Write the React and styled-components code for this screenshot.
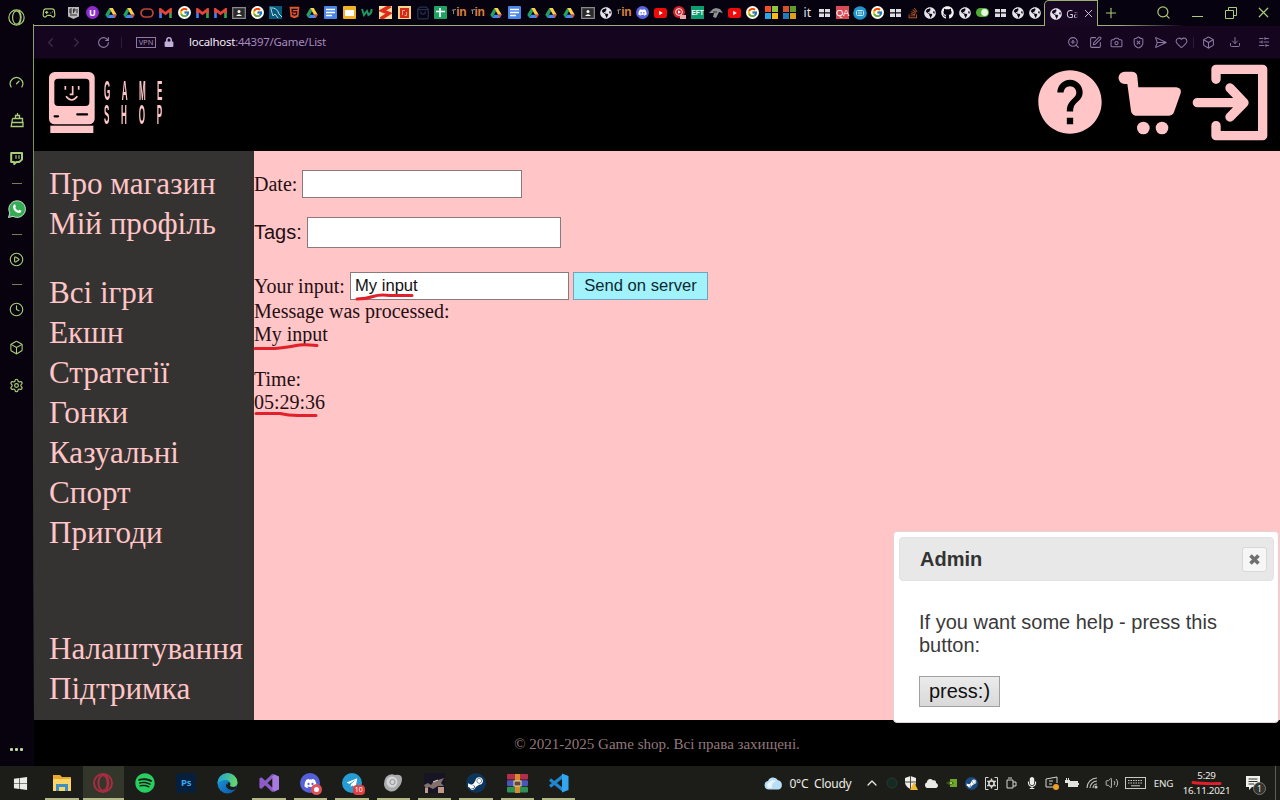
import React from 'react';
import styled, { createGlobalStyle } from 'styled-components';
import {
  Gauge, CirclePlay, Clock, Box, Settings, Gamepad2, Search, X, Plus, ChevronLeft, ChevronRight,
  ChevronUp, RotateCw, ZoomIn, SquarePen, Camera, ShieldX, SendHorizontal, Heart, Download, SlidersHorizontal,
  Volume2, ShoppingBag,
} from 'lucide-react';
import {
  FaWhatsapp, FaWindows, FaSpotify, FaDiscord, FaTelegramPlane, FaSteamSymbol, FaGithub,
  FaStackOverflow, FaHtml5, FaGlobeAmericas, FaLock, FaMicrophone, FaCloud,
} from 'react-icons/fa';
import { FcGoogle } from 'react-icons/fc';
import { MdHelp } from 'react-icons/md';

const PINK = '#ffc5c7';
const LIME = '#a9cc75';
const UI = '"Noto Sans", "Open Sans", sans-serif';
const SERIF = '"Liberation Serif", serif';
const SANS = '"Liberation Sans", sans-serif';

const Global = createGlobalStyle`
  *, *::before, *::after { box-sizing: border-box; }
  body { margin: 0; background: #000; overflow: hidden; }
  svg { display: block; flex: none; }
`;

const Screen = styled.div`
  position: relative;
  width: 1280px;
  height: 800px;
  display: flex;
  flex-direction: column;
  overflow: hidden;
  font-family: ${UI};
`;
const Browser = styled.div`
  display: flex;
  height: 766px;
`;
const Window = styled.div`
  width: 1246px;
  display: flex;
  flex-direction: column;
`;
const Cell = styled.div`
  flex: none;
  width: ${(p) => p.$w}px;
  height: ${(p) => (p.$h ? `${p.$h}px` : '100%')};
  display: flex;
  align-items: center;
  justify-content: center;
`;

/* ---------- browser side bar ---------- */
const SideBar = styled.div`
  width: 34px;
  flex: none;
  display: flex;
  flex-direction: column;
  background: #08020f;
  border-right: 1px solid;
  border-image: linear-gradient(#08020f 25px, #8da561 25px, #7b9157 150px, #3f4934 300px, #2b2c28 560px, #0b0410 720px) 1;
  color: ${LIME};
`;
const Dash = styled.i`
  width: 10px;
  height: 1px;
  background: #75805a;
`;
const Spring = styled.div`
  flex: 1;
`;
const Dots = styled.div`
  display: flex;
  gap: 2.5px;
  span { width: 2.5px; height: 2.5px; background: #c3d79c; border-radius: 1px; }
`;

/* ---------- tab strip ---------- */
const TabStrip = styled.div`
  height: 26px;
  display: flex;
  align-items: stretch;
  background: #07020f;
  border-bottom: 1px solid;
  border-image: linear-gradient(90deg, #9db073 0, #9db073 1085px, #07020f 1150px) 1;
  color: ${LIME};
`;
const ActiveTab = styled.div`
  width: 54px;
  height: 26px;
  flex: none;
  display: flex;
  align-items: center;
  gap: 4px;
  padding-left: 5px;
  background: #180722;
  border: 1px solid #9db073;
  border-bottom: 0;
  border-radius: 5px 0 0 0;
  color: #d9d2de;
`;
const TabTitle = styled.span`
  width: 12px;
  overflow: hidden;
  white-space: nowrap;
  font-size: 10px;
  line-height: 14px;
  mask-image: linear-gradient(90deg, #000 70%, transparent);
`;
const Tile = styled.span`
  width: 13px;
  height: 13px;
  display: flex;
  align-items: center;
  justify-content: center;
  white-space: nowrap;
  background: ${(p) => p.$bg || 'transparent'};
  color: ${(p) => p.$fg || '#fff'};
  border-radius: ${(p) => p.$r || 0}px;
  font: ${(p) => p.$font || `400 8px/13px ${UI}`};
  letter-spacing: ${(p) => p.$ls || 0}px;
`;

/* ---------- address bar ---------- */
const AddressBar = styled.div`
  height: 33px;
  display: flex;
  align-items: center;
  background: #15051f;
  border-bottom: 1px solid #09030d;
  color: #8e79a4;
`;
const Faint = styled.div`
  display: flex;
  color: #3c2b49;
`;
const Divider = styled.i`
  width: 1px;
  height: 11px;
  background: #2d1b39;
`;
const Vpn = styled.span`
  width: 20px;
  height: 11px;
  border: 1px solid #8e79a4;
  font-size: 7.5px;
  line-height: 9px;
  text-align: center;
  color: #a08bb5;
`;
const Url = styled.div`
  margin-left: 8px;
  flex: 1;
  font-size: 11.4px;
  line-height: 16px;
  letter-spacing: -0.22px;
  color: #a58cbd;
  b { font-weight: 400; color: #f3eef6; }
`;

/* ---------- shop page ---------- */
const Header = styled.header`
  height: 92px;
  display: flex;
  align-items: center;
  justify-content: space-between;
  padding: 0 12px 5px 15px;
  background: #000;
`;
const Brand = styled.div`
  display: flex;
  align-items: flex-start;
  gap: 9px;
`;
const BrandName = styled.div`
  width: 70px;
  padding-top: 7px;
  color: ${PINK};
  font: 700 27px/24px ${SANS};
`;
const BrandWord = styled.div`
  width: 230px;
  letter-spacing: ${(p) => p.$ls}px;
  transform: scaleX(0.3);
  transform-origin: 0 0;
  white-space: nowrap;
`;
const Actions = styled.div`
  display: flex;
  align-items: center;
  gap: 10px;
  color: ${PINK};
`;
const Body = styled.div`
  display: flex;
  height: 569px;
`;
const Menu = styled.nav`
  width: 220px;
  flex: none;
  padding: 12.5px 0 0 15px;
  display: flex;
  flex-direction: column;
  background: #353331;
`;
const MenuGroup = styled.div`
  display: flex;
  flex-direction: column;
  margin-bottom: ${(p) => p.$after}px;
`;
const MenuLink = styled.a`
  height: 40px;
  color: ${PINK};
  font: 400 31.1px/40px ${SERIF};
  white-space: nowrap;
`;
const Content = styled.main`
  flex: 1;
  padding-top: 19px;
  background: ${PINK};
  color: #240f12;
  font: 400 20px/23px ${SERIF};
`;
const Field = styled.div`
  display: flex;
  align-items: center;
  height: ${(p) => p.$h}px;
  margin-bottom: ${(p) => p.$after || 0}px;
  font-family: ${(p) => (p.$sans ? SANS : SERIF)};
`;
const Label = styled.label`
  width: ${(p) => p.$w}px;
  white-space: nowrap;
`;
const Input = styled.input`
  width: ${(p) => p.$w}px;
  height: 100%;
  margin: 0;
  padding: 1px 4px;
  border: 1px solid #8b7a7b;
  border-radius: 0;
  background: #fff;
  color: #111;
  font: 400 16.6px ${SANS};
  outline: 0;
`;
const SendButton = styled.button`
  width: 135px;
  height: 28px;
  margin-left: 4px;
  padding: 0;
  border: 1px solid #6fa3c4;
  background: #a2f2fc;
  color: #0d2a30;
  font: 400 16.6px ${SANS};
`;
const Output = styled.div`
  margin-bottom: 22px;
`;
const Footer = styled.footer`
  height: 46px;
  display: flex;
  align-items: center;
  justify-content: center;
  padding-top: 1px;
  background: #000;
  color: #93787a;
  font: 400 15px/20px ${SERIF};
`;

/* ---------- help dialog ---------- */
const Dialog = styled.section`
  position: absolute;
  left: 893px;
  top: 531px;
  width: 386px;
  height: 192px;
  padding: 5px 4px 4px 5px;
  background: #fff;
  border: 1px solid #e4d3d4;
  border-radius: 4px;
  color: #3a3a3a;
  font: 400 20px/23px ${SANS};
`;
const DialogTitle = styled.div`
  height: 44px;
  display: flex;
  align-items: center;
  justify-content: space-between;
  padding: 0 6px 0 20px;
  background: #e8e8e8;
  border: 1px solid #e2e2e2;
  border-radius: 4px;
  color: #333;
  font-weight: 700;
`;
const CloseButton = styled.button`
  width: 25px;
  height: 25px;
  padding: 0;
  display: flex;
  align-items: center;
  justify-content: center;
  border: 1px solid #d8d8d8;
  border-radius: 3px;
  background: #f6f6f6;
`;
const DialogBody = styled.div`
  padding: 30px 40px 0 20px;
`;
const PressButton = styled.button`
  display: block;
  width: 81px;
  height: 31px;
  margin-top: 19px;
  padding: 0;
  border: 1px solid #a0a0a0;
  background: linear-gradient(#ebebeb, #d9d9d9);
  color: #111;
  font: 400 20px ${SANS};
`;

/* ---------- taskbar ---------- */
const TaskBar = styled.div`
  height: 34px;
  display: flex;
  background: #1c1d18;
  color: #ecece6;
`;
const Task = styled.div`
  position: relative;
  width: 41.4px;
  flex: none;
  display: flex;
  align-items: center;
  justify-content: center;
  background: ${(p) => (p.$active ? '#33362a' : 'transparent')};
  &::after {
    content: '';
    position: absolute;
    bottom: 0;
    left: ${(p) => (p.$active ? 0 : 4)}px;
    right: ${(p) => (p.$active ? 0 : 4)}px;
    height: 2px;
    background: ${(p) => (p.$open ? '#b4b886' : 'transparent')};
  }
`;
const Round = styled.span`
  position: relative;
  width: 20px;
  height: 20px;
  display: flex;
  align-items: center;
  justify-content: center;
  border-radius: ${(p) => p.$r ?? 10}px;
  background: ${(p) => p.$bg};
  color: ${(p) => p.$fg || '#fff'};
  font: 700 9.5px/20px ${UI};
`;
const Badge = styled.span`
  position: absolute;
  right: -3px;
  bottom: -2px;
  min-width: 12px;
  height: 10px;
  padding: 0 1px;
  border-radius: 4px;
  background: #e0403f;
  color: #fff;
  font: 400 7px/10px ${UI};
  text-align: center;
`;
const Dot = styled.i`
  position: absolute;
  right: -2px;
  bottom: -2px;
  width: 11px;
  height: 11px;
  border-radius: 50%;
  border: 3px solid #e2525c;
  background: #fff;
`;
const Weather = styled.div`
  display: flex;
  align-items: center;
  width: 98px;
  gap: 7px;
  font-size: 12px;
  letter-spacing: -0.25px;
  white-space: pre;
`;
const TrayText = styled.div`
  width: ${(p) => p.$w}px;
  flex: none;
  text-align: center;
  font-size: 9.8px;
  line-height: 15px;
  letter-spacing: -0.25px;
  align-self: center;
`;
const Notice = styled.div`
  position: relative;
  display: flex;
  align-items: center;
  justify-content: center;
  width: 41px;
  padding-right: 4px;
  border-right: 1px solid #5b5c56;
`;
const NoticeCount = styled.span`
  position: absolute;
  left: 18px;
  top: 16px;
  width: 13px;
  height: 13px;
  border: 1px solid #77786f;
  border-radius: 50%;
  background: #33342e;
  font-size: 8.5px;
  line-height: 11px;
  text-align: center;
`;
const Ink = styled.svg`
  position: absolute;
  left: 0;
  top: 0;
  fill: none;
  stroke: #e0202a;
  stroke-width: 3;
  stroke-linecap: round;
  stroke-linejoin: round;
  pointer-events: none;
`;

/* ---------- small drawings ---------- */
const Drive = () => (
  <svg width="12" height="12" viewBox="0 0 12 12">
    <path d="M4.2 1 L0.3 7.8 L2.3 11 L6 4.3Z" fill="#21a463" />
    <path d="M4.2 1 H7.8 L11.7 7.8 H8Z" fill="#ffcf48" />
    <path d="M4.3 7.8 H11.7 L9.7 11 H2.3Z" fill="#4688f4" />
    <path d="M11.7 7.8 L9.7 11 L7.9 7.8Z" fill="#e5483a" />
  </svg>
);
const Gmail = () => (
  <svg width="13" height="10" viewBox="0 0 13 10">
    <path d="M1.5 10V1.5" stroke="#4285f4" strokeWidth="2.6" />
    <path d="M11.5 10V1.5" stroke="#34a853" strokeWidth="2.6" />
    <path d="M1.5 5V1.6L6.5 5.6L11.5 1.6V5" stroke="#ea4335" strokeWidth="2.7" fill="none" />
  </svg>
);
const Docs = () => (
  <Tile $bg="#4a86e8" $r={1}>
    <svg width="9" height="9" viewBox="0 0 9 9"><path d="M0 1.5H9M0 4.5H9M0 7.5H6" stroke="#fff" strokeWidth="1.4" /></svg>
  </Tile>
);
const Sheets = () => (
  <Tile $bg="#1fa362" $r={1}>
    <svg width="9" height="9" viewBox="0 0 9 9"><path d="M0 3.5H9M4 0V9" stroke="#fff" strokeWidth="1.7" /></svg>
  </Tile>
);
const Slides = () => (
  <Tile $bg="#f0b323" $r={1}>
    <svg width="9" height="6" viewBox="0 0 9 6"><path d="M0 0H9V6H0Z" fill="#fff" /></svg>
  </Tile>
);
const Classroom = () => (
  <svg width="14" height="12" viewBox="0 0 14 12">
    <path d="M.7 .7H13.3V11.3H.7Z" fill="#2b2b2b" stroke="#8a8a8e" strokeWidth="1.2" />
    <circle cx="7" cy="4.6" r="1.5" fill="#fff" /><path d="M4 9Q7 5.6 10 9Z" fill="#fff" />
  </svg>
);
const Squares = ({ colors, s = 6, g = 1 }) => (
  <svg width={s * 2 + g} height={s * 2 + g} viewBox={`0 0 ${s * 2 + g} ${s * 2 + g}`}>
    {colors.map((c, i) => (
      <rect key={i} x={(i % 2) * (s + g)} y={(i > 1 ? 1 : 0) * (s + g)} width={s} height={s} fill={c} />
    ))}
  </svg>
);
const Blocks = () => (
  <svg width="11" height="8" viewBox="0 0 11 8">
    <path d="M0 0H5V3.3H0ZM6 0H11V3.3H6ZM0 4.6H5V8H0ZM6 4.6H11V8H6Z" fill="#dcdce2" />
  </svg>
);
const Globe = () => <FaGlobeAmericas size={12} color="#e6e3ea" />;
const Moodle = () => (
  <Tile $fg="#d9803c" $font={`700 12px/13px ${SANS}`} $ls={-0.3}>
    <svg width="4" height="7" viewBox="0 0 4 7"><path d="M0 1.2L4 .5M1.5 1V5" fill="none" stroke="#8c8880" /></svg>
    in
  </Tile>
);
const Oracle = () => (
  <svg width="14" height="10" viewBox="0 0 14 10"><rect x="1" y="1" width="12" height="8" rx="4" fill="none" stroke="#bd4635" strokeWidth="1.7" /></svg>
);
const Dolphin = () => (
  <Tile $bg="#075a7b">
    <svg width="13" height="13" viewBox="0 0 13 13"><path d="M1 2Q8 1 10 8L13 11M2 3Q3 7 4 10L6 8L9 12" fill="none" stroke="#b9dbe5" /></svg>
  </Tile>
);
const Epic = () => (
  <svg width="11" height="12" viewBox="0 0 11 12">
    <path d="M0 0H11V9.5L5.5 12L0 9.5Z" fill="#b9b9bb" />
    <path d="M2 2V6M2 2H4M2 4H4M2 6H4M5.5 2V6M5.5 2H7V4H5.5M9 2V6M2 8H9" stroke="#222" strokeWidth=".9" fill="none" />
  </svg>
);
const Bag = () => <ShoppingBag size={14} strokeWidth={2.2} color="#22304f" />;
const RedS = () => (
  <Tile $bg="#f6dfa0">
    <svg width="13" height="13" viewBox="0 0 13 13"><path d="M11.5 0L3 4.6L10 7.4L1.5 13" fill="none" stroke="#df2b1c" strokeWidth="3.6" /></svg>
  </Tile>
);
const RedSquare = () => (
  <Tile $bg="#f3d58e">
    <svg width="9" height="10" viewBox="0 0 9 10"><path d="M0 0H9V10H0Z" fill="#d8281c" /><path d="M2.5 7V2.5H5M4.5 7.5H6.5V4" fill="none" stroke="#f3b58e" strokeWidth=".9" /></svg>
  </Tile>
);
const Wave = () => (
  <svg width="12" height="9" viewBox="0 0 12 9"><path d="M1 1L3 7L6 3L7.5 7Q11 5 10.5 1" fill="none" stroke="#1f9765" strokeWidth="2" /></svg>
);
const Wings = () => (
  <svg width="14" height="12" viewBox="0 0 14 12"><path d="M0 6L4 2L7 1L11 2L14 6L10 5L7 11L4 10L5 6Z" fill="#8d9290" /><path d="M4 5H8" stroke="#222" /></svg>
);
const RedDisc = () => (
  <svg width="13" height="13" viewBox="0 0 13 13"><circle cx="6" cy="6" r="6" fill="#d1202c" /><circle cx="6" cy="6" r="3.4" fill="none" stroke="#fff" strokeWidth=".9" /><path d="M5 4.3L8 6L5 7.7Z" fill="#fff" /><path d="M7 9H13V13H7Z" fill="#e7a9a9" /></svg>
);
const BlueDisc = () => (
  <svg width="14" height="14" viewBox="0 0 14 14"><circle cx="7" cy="7" r="6.8" fill="#2195c9" /><rect x="3.5" y="4.5" width="7" height="5" rx="1" fill="none" stroke="#bfe7f7" /><path d="M5 6.2H9M5 7.8H9" stroke="#bfe7f7" strokeWidth=".8" /></svg>
);
const Toggle = () => (
  <svg width="13" height="9" viewBox="0 0 13 9"><rect width="13" height="9" rx="4.5" fill="#4fae34" /><circle cx="8.6" cy="4.5" r="3.4" fill="#e9f6e4" /></svg>
);
const Tube = () => (
  <svg width="13" height="10" viewBox="0 0 13 10"><rect width="13" height="10" rx="2.5" fill="#f00b0b" /><path d="M5.2 2.8L8.8 5L5.2 7.2Z" fill="#fff" /></svg>
);
const Discord = () => <Tile $bg="#5a64dd" $r={7}><FaDiscord size={9} /></Tile>;
const Uni = () => <Tile $bg="#8e2ccb" $r={7} $font={`700 9px/13px ${UI}`}>U</Tile>;
const Eft = () => <Tile $bg="#0d9b70" $font={`700 6.5px/13px ${SANS}`}>EFT</Tile>;
const It = () => <Tile $fg="#e8e6ea" $font={`400 12px/17px ${UI}`}>it</Tile>;
const Qa = () => <Tile $bg="#d94a55" $font={`400 9.5px/13px ${SANS}`} $ls={-0.5}>QA</Tile>;
const Google = () => <Tile $bg="#fff" $r={7}><FcGoogle size={11} /></Tile>;
const MsBright = () => <Squares colors={['#f25022', '#8cc63f', '#2aa5ea', '#fdb913']} />;
const MsDark = () => <Squares colors={['#d8502b', '#5f9c2b', '#1c7bc0', '#dba11b']} />;
const Html = () => <FaHtml5 size={13} color="#e4552b" />;
const Stack = () => <FaStackOverflow size={12} color="#b45a2a" />;
const Git = () => <FaGithub size={13} color="#f4f4f6" />;

const WIDE_TABS = [
  Epic, Uni, Drive, Drive, Oracle, Gmail, Google, Gmail, Gmail, Classroom, Google, Dolphin, Html, Drive, Docs,
  Slides, Wave, RedS, RedSquare, Bag, Sheets, Moodle, Moodle, Drive, Docs, Drive, Drive, Drive, Classroom,
  Globe, Moodle, Discord, Tube, RedDisc, Eft, Wings, Tube, Google, MsBright, MsDark,
];
const NARROW_TABS = [It, Blocks, Qa, BlueDisc, Google, Blocks, Stack, Globe, Git, Globe, Toggle, Blocks, Globe, Globe];

const OperaRing = ({ size, color, w = 1.6 }) => (
  <svg width={size} height={size} viewBox="0 0 20 20" fill="none" stroke={color} strokeWidth={w}>
    <circle cx="10" cy="10" r="9" /><ellipse cx="10" cy="10" rx="4.6" ry="7.8" /><path d="M13 2.2Q18 10 13 17.8" />
  </svg>
);
const CartBag = () => (
  <svg width="14" height="15" viewBox="0 0 14 15" fill="none" stroke={LIME} strokeWidth="1.3">
    <path d="M2.5 5.5H12.5V9.5M2.5 5.5L1.2 13.5H13V9.5H2M5.5 5.5V2.5H9.5V5.5M7.5 0V2.5" />
  </svg>
);
const TwitchMark = () => (
  <svg width="13" height="13" viewBox="0 0 13 13" fill="none" stroke={LIME}>
    <path d="M1.2 1H12V7.6L9.2 10H6.4L4.2 12V10H1.2Z" strokeWidth="2" strokeLinejoin="round" />
    <path d="M6 3.3V6.8M9 3.3V6.8" strokeWidth="1.2" />
  </svg>
);
const WhatsAppMark = () => (
  <svg width="18" height="18" viewBox="0 0 18 18">
    <path d="M.5 17.5L1.8 13A8.3 8.3 0 1 1 5 16.3Z" fill="#35ad57" stroke="#dcebdc" strokeWidth=".9" />
    <path d="M6 4.6L7.2 4.5L8 6.6L7.2 7.7Q8.2 9.7 10.3 10.7L11.4 9.7L13.4 10.7Q13.5 12.8 11.3 13Q6 12.5 5 7.3Q4.900 5.500 6 4.600Z" fill="#fff" />
  </svg>
);
const Restore = () => (
  <svg width="12" height="12" viewBox="0 0 12 12" fill="none" stroke={LIME}><path d="M.5 3.5H8.5V11.5H.5ZM3.5 3V.5H11.5V8.5H9" /></svg>
);
const Computer = () => (
  <svg width="45.7" height="61.7" viewBox="147 36 137 185">
    <rect x="147" y="36" width="137" height="157" rx="17" fill={PINK} />
    <rect x="151" y="197" width="129" height="24" fill={PINK} />
    <rect x="163" y="56" width="105" height="82" rx="11" fill="#000" />
    <g fill="none" stroke={PINK} strokeWidth="5">
      <path d="M196 78V89M236 78V89M218 78V103H209M198 109Q215 131 232 109" />
    </g>
    <path d="M164 169H174M232 163H261" stroke="#000" strokeWidth="7" strokeLinecap="round" />
  </svg>
);
const Cart = () => (
  <svg width="64" height="65.3" viewBox="355 40 192 196" fill={PINK}>
    <path d="M375 45H398Q412 46 413 60L416 92H530Q547 94 543 110L524 164Q520 177 508 177H408Q397 176 394 163L383 82H375A18.5 18.5 0 0 1 375 45Z" />
    <circle cx="431" cy="214" r="19" /><circle cx="487" cy="214" r="19" />
  </svg>
);
const Exit = () => (
  <svg width="76" height="77.3" viewBox="576 23 228 232" fill="none" stroke={PINK} strokeWidth="28" strokeLinecap="round" strokeLinejoin="round">
    <path d="M648 69V39H788V238H648V208M592 139H730M690 95L732 139L690 182" />
    <path d="M700 120L725 139L700 158Z" fill={PINK} stroke="none" />
  </svg>
);
const Folder = () => (
  <svg width="20" height="18" viewBox="0 0 20 18">
    <path d="M1 1H8L10 3H19V17H1Z" fill="#e9a92c" /><path d="M1 5H19V17H1Z" fill="#fbd568" /><path d="M4 17V10H16V17H13V13H7V17Z" fill="#3d8fc4" />
  </svg>
);
const Edge = () => (
  <svg width="21" height="21" viewBox="0 0 21 21">
    <defs>
      <linearGradient id="edgeA" x1="0" y1="0" x2="1" y2=".3"><stop offset="0" stopColor="#1b9de2" /><stop offset="1" stopColor="#62d66a" /></linearGradient>
      <linearGradient id="edgeB" x1="0" y1="0" x2="1" y2="1"><stop offset="0" stopColor="#1aa0df" /><stop offset="1" stopColor="#0b4fa3" /></linearGradient>
    </defs>
    <circle cx="10.5" cy="10.5" r="10" fill="url(#edgeB)" />
    <path d="M.5 10.5A10 10 0 0 1 20.5 9.5C20.5 14 15 15 12.5 13C14.5 10.5 12.5 7 9 7C5 7 1.5 9 .5 10.5Z" fill="url(#edgeA)" />
    <path d="M12.8 12.8C10 13 10 9 12 9.2C14 10 13.5 12 12.8 12.8C15 14.6 18 14 20 13L18.5 16C14 18.5 8.5 16 9 11" fill="#1c1d18" />
  </svg>
);
const VisualStudio = () => (
  <svg width="21" height="20" viewBox="0 0 21 20" fill="none" stroke="#a67be0" strokeWidth="3.2" strokeLinejoin="round">
    <path d="M14.5 2L2 14V6L14.5 18" stroke="#8a5bc9" /><path d="M14.5 3V17" strokeWidth="2.4" /><path d="M14.500 1L20 3.500V16.500L14.500 19Z" fill="#a67be0" stroke="none" />
  </svg>
);
const VsCode = () => (
  <svg width="21" height="20" viewBox="0 0 21 20" fill="none">
    <path d="M15 3L2 13.5M15 17L2 6.5" stroke="#1f86cf" strokeWidth="3.2" /><path d="M14 .5L20.5 3V17L14 19.5Z" fill="#32a6ee" />
  </svg>
);
const Blob = () => (
  <svg width="20" height="20" viewBox="0 0 20 20">
    <path d="M3 4Q7 0 12 2Q19 1 19 6Q19 11 15 15Q11 20 6 18Q1 16 1 11Q1 7 3 4Z" fill="#a9abac" /><circle cx="9" cy="9" r="5.5" fill="#d3d5d6" /><circle cx="9.500" cy="9" r="2.600" stroke="#909497" fill="none" />
  </svg>
);
const Fighter = () => (
  <svg width="21" height="20" viewBox="0 0 21 20">
    <rect width="21" height="20" fill="#171423" /><path d="M0 12L4 10L7 12L10 8L14 7L20 5L17 10L20 13L14 13L9 16L5 14L2 16Z" fill="#81706c" /><path d="M9 9L14 7" stroke="#d9d3d0" fill="none" /><path d="M1 15H4V20H1ZM14 14H20V20H14Z" fill="#bf9a8d" />
  </svg>
);
const Rar = () => (
  <svg width="21" height="19" viewBox="0 0 21 19">
    <rect width="21" height="5.6" rx="1" fill="#b32e48" /><rect y="6.3" width="21" height="5.8" rx="1" fill="#4a55b8" /><rect y="12.8" width="21" height="5.8" rx="1" fill="#2e9155" />
    <rect x="8" width="5" height="19" fill="#d98a2b" /><rect x="7" y="7" width="7" height="5" fill="#6c4433" stroke="#ead9b0" />
  </svg>
);
const WeatherCloud = () => (
  <svg width="19" height="14" viewBox="0 0 19 14"><path d="M5 13.5A4.3 4.3 0 0 1 4 5A5.6 5.6 0 0 1 14 4.2A4.8 4.8 0 0 1 14.5 13.5Z" fill="#b9dff6" /><path d="M5 12A3 3 0 0 1 5 6.5A5 5 0 0 1 12 5Q7 7 8 12Z" fill="#e8f5fd" /></svg>
);
const Nvidia = () => (
  <svg width="11" height="8" viewBox="0 0 11 8"><path d="M4 0H11V8H4Z" fill="#6fa52b" /><path d="M0 4Q4 0 8 4Q4 8 0 4Z" fill="#35551b" /><circle cx="5" cy="4" r="1.3" fill="#9fd14f" /></svg>
);
const Gear = () => (
  <svg width="13" height="13" viewBox="0 0 13 13" fill="none" stroke="#d7d7d1">
    <path d="M3.500 .5H.5V12.500H3.500M9.500 .5H12.500V12.500H9.500" />
    <circle cx="6.500" cy="6.500" r="2.600" strokeWidth="1.600" /><path d="M6.500 1.500V3.500M6.500 9.500V11.500M2.300 4L4 5M9 8L10.700 9M2.300 9L4 8M9 5L10.700 4" strokeWidth="1.500" />
  </svg>
);
const Cup = () => (
  <svg width="11" height="12" viewBox="0 0 11 12" fill="none" stroke="#d7d7d1"><path d="M1 3H7V11H1ZM2 1H6M7 5H10V9H7" /></svg>
);
const Display = () => (
  <svg width="14" height="14" viewBox="0 0 14 14" fill="none" stroke="#d7d7d1"><path d="M1 3L12 1V7M1 3V11H8M4 5H8M4 8H7" /><circle cx="11" cy="11" r="3" fill="#f0a02a" stroke="none" /></svg>
);
const Battery = () => (
  <svg width="14" height="10" viewBox="0 0 14 10" fill="#e2e2dc"><path d="M3 3H13V9H3ZM13 5H14V7H13ZM0 2H5V5H0ZM1 0H2V2H1ZM3 0H4V2H3Z" /></svg>
);
const Signal = () => (
  <svg width="12" height="12" viewBox="0 0 12 12" fill="none" stroke="#c5c5bf" strokeWidth="1.1"><path d="M1 11A10 10 0 0 1 11 1M4 11A7 7 0 0 1 11 4M7 11A4 4 0 0 1 11 7" /><circle cx="10" cy="10" r="1" fill="#ddd" /></svg>
);
const Keys = () => (
  <svg width="21" height="12" viewBox="0 0 21 12" fill="none" stroke="#c9c9c3"><rect x=".5" y=".5" width="20" height="11" /><path d="M3 3.5H18M3 6H18" strokeDasharray="1.5 1" /><path d="M6 8.8H15" /></svg>
);
const Message = () => (
  <svg width="15" height="14" viewBox="0 0 15 14"><path d="M0 0H14V11H6L3 14V11H0Z" fill="#f1f1ec" /><path d="M2.5 3H11.5M2.5 5.5H11.5M2.5 8H8" stroke="#33342e" /></svg>
);

const SIDE_ITEMS = [
  <Gauge size={15} strokeWidth={1.9} />, <CartBag />, <TwitchMark />, null, <WhatsAppMark />, null,
  <CirclePlay size={15} strokeWidth={1.8} />, null, <Clock size={15} strokeWidth={1.8} />,
  <Box size={15} strokeWidth={1.7} />, <Settings size={15} strokeWidth={1.9} />,
];

const TASKS = [
  { icon: <FaWindows size={15} /> },
  { icon: <Folder />, open: true },
  { icon: <OperaRing size={20} color="#a82c42" w={2} />, open: true, active: true },
  { icon: <FaSpotify size={20} color="#27cf60" /> },
  { icon: <Round $bg="#06203c" $r={3} $fg="#38a4f2">Ps</Round> },
  { icon: <Edge /> },
  { icon: <VisualStudio />, open: true },
  { icon: <Round $bg="#5560d8"><FaDiscord size={13} /><Dot /></Round>, open: true },
  { icon: <Round $bg="#279bd3"><FaTelegramPlane size={12} /><Badge>10</Badge></Round>, open: true },
  { icon: <Blob />, open: true },
  { icon: <Fighter />, open: true },
  { icon: <Round $bg="#0d355c"><FaSteamSymbol size={17} /></Round>, open: true },
  { icon: <Rar />, open: true },
  { icon: <VsCode />, open: true },
];

const TRAY = [
  [<ChevronUp size={16} strokeWidth={1.9} />, 21],
  [<svg width="12" height="12" viewBox="0 0 12 12"><circle cx="6" cy="6" r="5" fill="#142a22" stroke="#24392f" /></svg>, 19],
  [<svg width="13" height="14" viewBox="0 0 13 14"><path d="M0 2L5.5 0L11 2V7Q10 11 5.5 13Q1 11 0 7Z" fill="#eeeee8" /><path d="M5.5 0V13M0 6H11" stroke="#44453e" /><path d="M9 6L13 14H5Z" fill="#f1b92e" /></svg>, 20],
  [<FaCloud size={13} color="#e8e8e4" />, 20],
  [<Nvidia />, 20],
  [<Round $bg="#1b4b7d"><FaSteamSymbol size={11} /></Round>, 20],
  [<Gear />, 20],
  [<Cup />, 20],
  [<FaMicrophone size={12} />, 20],
  [<Display />, 20],
  [<Battery />, 20.5],
  [<Signal />, 20],
  [<Volume2 size={14} strokeWidth={1.6} color="#c5c5bf" />, 19],
  [<Keys />, 28],
];
TRAY[5][0] = <Tile $bg="#1b4b7d" $r={7}><FaSteamSymbol size={11} /></Tile>;

const TOOLS = [
  [ZoomIn, 22], [SquarePen, 21.5], [Camera, 21.5], [ShieldX, 21.5], [SendHorizontal, 22], [Heart, 21.5],
];

export default function App() {
  return (
    <>
      <Global />
      <Screen>
        <Browser>
          <SideBar>
            <Cell $w={33} $h={34}><OperaRing size={17} color={LIME} w={1.4} /></Cell>
            <Cell $w={33} $h={30} />
            {SIDE_ITEMS.map((item, i) => (
              <Cell key={i} $w={33} $h={item ? 37.7 : 12.9}>{item || <Dash />}</Cell>
            ))}
            <Spring />
            <Cell $w={33} $h={33}><Dots><span /><span /><span /></Dots></Cell>
          </SideBar>
          <Window>
            <TabStrip>
              <Cell $w={30.8}><Gamepad2 size={14} strokeWidth={2} /></Cell>
              {WIDE_TABS.map((Icon, i) => <Cell key={i} $w={18.35}><Icon /></Cell>)}
              {NARROW_TABS.map((Icon, i) => <Cell key={i} $w={17.55}><Icon /></Cell>)}
              <ActiveTab>
                <Globe />
                <TabTitle>Ga</TabTitle>
                <X size={13} strokeWidth={1.7} />
              </ActiveTab>
              <Cell $w={26}><Plus size={16} strokeWidth={1.6} /></Cell>
              <Spring />
              <Cell $w={34}><Search size={15} strokeWidth={1.9} /></Cell>
              <Cell $w={34}><svg width="11" height="11" viewBox="0 0 11 11"><path d="M0 9.5H11" stroke={LIME} /></svg></Cell>
              <Cell $w={33}><Restore /></Cell>
              <Cell $w={33}><X size={17} strokeWidth={1.7} /></Cell>
            </TabStrip>
            <AddressBar>
              <Cell $w={3} />
              <Faint>
                <Cell $w={26}><ChevronLeft size={15} /></Cell>
                <Cell $w={26}><ChevronRight size={15} /></Cell>
              </Faint>
              <Cell $w={28}><RotateCw size={13} strokeWidth={2} /></Cell>
              <Cell $w={9}><Divider /></Cell>
              <Cell $w={40}><Vpn>VPN</Vpn></Cell>
              <Cell $w={6}><FaLock size={10} color="#c4b0d6" /></Cell>
              <Cell $w={9} />
              <Url><b>localhost</b>:44397/Game/List</Url>
              {TOOLS.map(([Icon, w], i) => <Cell key={i} $w={w}><Icon size={13} strokeWidth={1.9} /></Cell>)}
              <Cell $w={2}><Divider /></Cell>
              <Cell $w={27}><Box size={13} strokeWidth={1.9} /></Cell>
              <Cell $w={26.5}><Download size={12} strokeWidth={1.9} /></Cell>
              <Cell $w={32}><SlidersHorizontal size={12} strokeWidth={1.9} /></Cell>
            </AddressBar>
            <Header>
              <Brand>
                <Computer />
                <BrandName>
                  <BrandWord $ls={38}>GAME</BrandWord>
                  <BrandWord $ls={39}>SHOP</BrandWord>
                </BrandName>
              </Brand>
              <Actions>
                <MdHelp size={76} />
                <Cart />
                <Exit />
              </Actions>
            </Header>
            <Body>
              <Menu>
                <MenuGroup $after={29}>
                  <MenuLink>Про магазин</MenuLink>
                  <MenuLink>Мій профіль</MenuLink>
                </MenuGroup>
                <MenuGroup $after={76}>
                  <MenuLink>Всі ігри</MenuLink>
                  <MenuLink>Екшн</MenuLink>
                  <MenuLink>Стратегії</MenuLink>
                  <MenuLink>Гонки</MenuLink>
                  <MenuLink>Казуальні</MenuLink>
                  <MenuLink>Спорт</MenuLink>
                  <MenuLink>Пригоди</MenuLink>
                </MenuGroup>
                <MenuGroup $after={0}>
                  <MenuLink>Налаштування</MenuLink>
                  <MenuLink>Підтримка</MenuLink>
                </MenuGroup>
              </Menu>
              <Content>
                <Field $h={28} $after={19}><Label $w={48}>Date:</Label><Input $w={220} /></Field>
                <Field $h={31} $after={24} $sans><Label $w={53}>Tags:</Label><Input $w={254} /></Field>
                <Field $h={28}>
                  <Label $w={96}>Your input:</Label>
                  <Input $w={219} defaultValue="My input" />
                  <SendButton>Send on server</SendButton>
                </Field>
                <Output>Message was processed:<br />My input</Output>
                <Output>Time:<br />05:29:36</Output>
              </Content>
            </Body>
            <Footer>© 2021-2025 Game shop. Всі права захищені.</Footer>
          </Window>
        </Browser>
        <TaskBar>
          {TASKS.map((t, i) => <Task key={i} $open={t.open} $active={t.active}>{t.icon}</Task>)}
          <Spring />
          <Weather><WeatherCloud />0°C  Cloudy</Weather>
          {TRAY.map(([icon, w], i) => <Cell key={i} $w={w}>{icon}</Cell>)}
          <TrayText $w={29}>ENG</TrayText>
          <TrayText $w={57}>5:29<br />16.11.2021</TrayText>
          <Notice><Message /><NoticeCount>1</NoticeCount></Notice>
          <Cell $w={4} />
        </TaskBar>
        <Dialog>
          <DialogTitle>
            Admin
            <CloseButton>
              <svg width="11" height="11" viewBox="0 0 11 11"><path d="M1.5 1.5L9.5 9.5M9.5 1.5L1.5 9.5" stroke="#707070" strokeWidth="3.6" /></svg>
            </CloseButton>
          </DialogTitle>
          <DialogBody>
            If you want some help - press this button:
            <PressButton>press:)</PressButton>
          </DialogBody>
        </Dialog>
        <Ink width="1280" height="800" viewBox="0 0 1280 800">
          <path d="M357 299Q366 299 373 296.5T390 295.5H412" />
          <path d="M255 348.5H275Q290 347 296 345.5T317 345.5" />
          <path d="M256 413.5H280Q288 415.5 298 415.5H316" />
          <path d="M1193 782.5Q1202 784 1220 783.5" />
        </Ink>
      </Screen>
    </>
  );
}
